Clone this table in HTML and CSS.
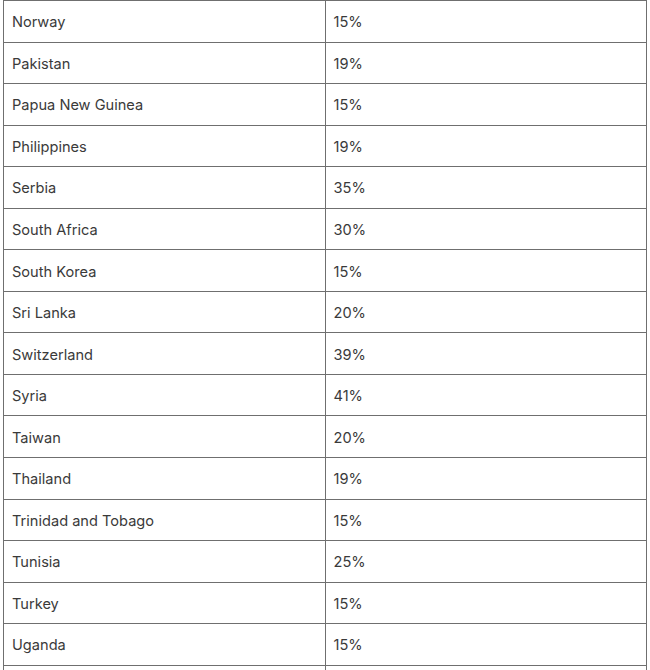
FILE: index.html
```html
<!DOCTYPE html>
<html lang="en">
<head>
<meta charset="utf-8">
<title>Tariff rates</title>
<link rel="stylesheet" href="styles.css">
</head>
<body>
<div class="wrap">
<table class="rates">
<tbody>
<tr><td>Norway</td><td>15%</td></tr>
<tr><td>Pakistan</td><td>19%</td></tr>
<tr><td>Papua New Guinea</td><td>15%</td></tr>
<tr><td>Philippines</td><td>19%</td></tr>
<tr><td>Serbia</td><td>35%</td></tr>
<tr><td>South Africa</td><td>30%</td></tr>
<tr><td>South Korea</td><td>15%</td></tr>
<tr><td>Sri Lanka</td><td>20%</td></tr>
<tr><td>Switzerland</td><td>39%</td></tr>
<tr><td>Syria</td><td>41%</td></tr>
<tr><td>Taiwan</td><td>20%</td></tr>
<tr><td>Thailand</td><td>19%</td></tr>
<tr><td>Trinidad and Tobago</td><td>15%</td></tr>
<tr><td>Tunisia</td><td>25%</td></tr>
<tr><td>Turkey</td><td>15%</td></tr>
<tr><td>Uganda</td><td>15%</td></tr>
<tr class="tail"><td></td><td></td></tr>
</tbody>
</table>
</div>
</body>
</html>
```
FILE: styles.css
```css
html, body {
  margin: 0;
  padding: 0;
  background: #fff;
}
.wrap {
  padding: 0 3px 0 3px;
  width: 644px;
}
.rates {
  width: 644px;
  border-collapse: collapse;
  table-layout: fixed;
  font-family: Inter, "Noto Sans", sans-serif;
  font-size: 14.6px;
  color: #3a3a3a;
}
.rates td {
  border: 1px solid #6f6f6f;
  height: 41.55px;
  padding: 2px 8px 0 8px;
  box-sizing: border-box;
  vertical-align: middle;
  width: 50%;
}
```
